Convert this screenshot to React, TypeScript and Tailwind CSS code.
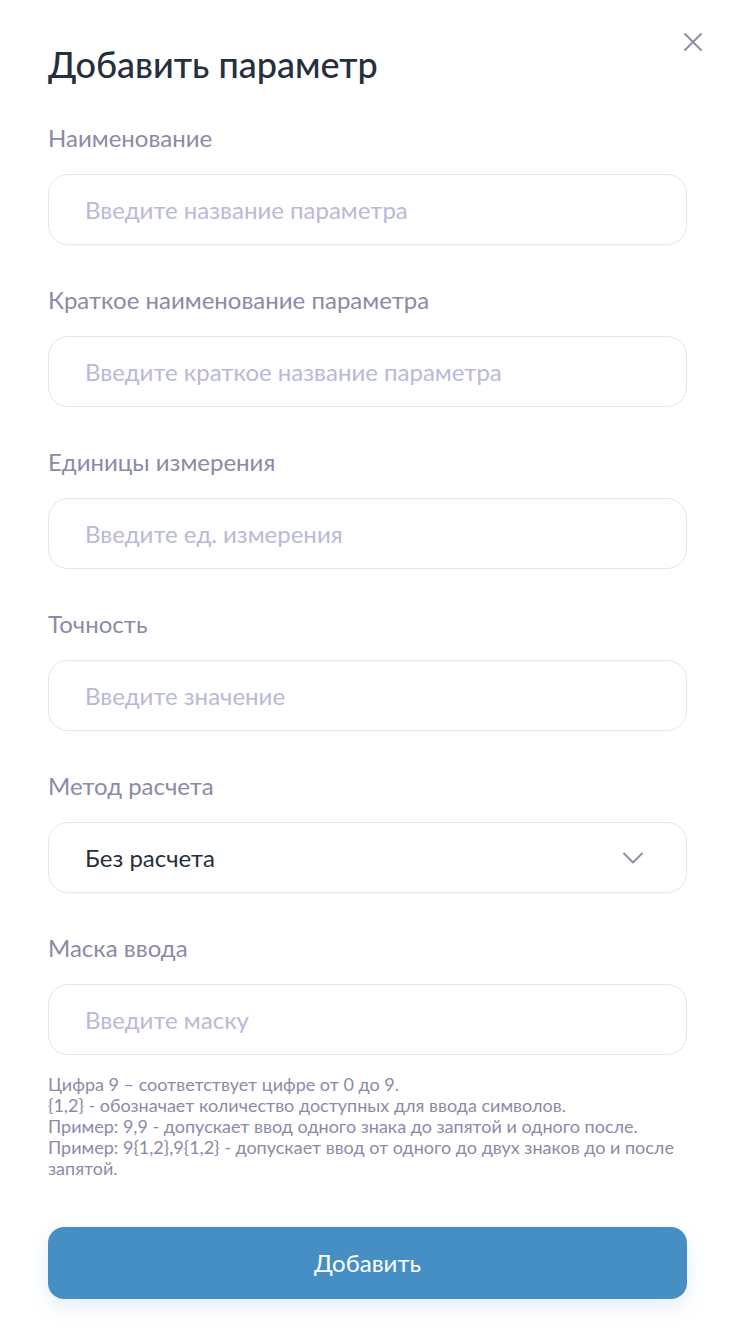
import React from 'react';

const fields = [
  { label: 'Наименование', placeholder: 'Введите название параметра' },
  { label: 'Краткое наименование параметра', placeholder: 'Введите краткое название параметра' },
  { label: 'Единицы измерения', placeholder: 'Введите ед. измерения' },
  { label: 'Точность', placeholder: 'Введите значение' },
];

export default function App() {
  return (
    <div className="min-h-screen bg-white font-['Lato','Noto_Sans',sans-serif] relative px-12 pt-[40px] pb-8">
      <button className="absolute right-[33px] top-[33px] text-[#8b8aa8]">
        <svg width="18" height="18" viewBox="0 0 18 18" fill="none" stroke="currentColor" strokeWidth="1.8" strokeLinecap="round">
          <path d="M1 1l16 16M17 1L1 17" />
        </svg>
      </button>

      <h1 className="text-[36px] leading-[48px] font-medium text-[#262f3d]">Добавить параметр</h1>

      <div className="mt-[35px] flex flex-col">
        {fields.map((f) => (
          <div key={f.label} className="mb-[40px]">
            <div className="text-[24px] leading-[30px] text-[#8b8aa8] mb-[21px]">{f.label}</div>
            <input
              placeholder={f.placeholder}
              className="w-full h-[71px] rounded-[20px] border border-[#d9ebf0] px-9 text-[24px] text-[#262f3d] placeholder:text-[#b9b9d9] outline-none"
            />
          </div>
        ))}

        <div className="mb-[40px]">
          <div className="text-[24px] leading-[30px] text-[#8b8aa8] mb-[21px]">Метод расчета</div>
          <div className="w-full h-[71px] rounded-[20px] border border-[#d9ebf0] pl-9 pr-[43px] flex items-center justify-between">
            <span className="text-[24px] text-[#262f3d]">Без расчета</span>
            <svg width="20" height="12" viewBox="0 0 20 12" fill="none" stroke="#8b8aa8" strokeWidth="1.8" strokeLinecap="round" strokeLinejoin="round">
              <path d="M1 1.5l9 9 9-9" />
            </svg>
          </div>
        </div>

        <div>
          <div className="text-[24px] leading-[30px] text-[#8b8aa8] mb-[21px]">Маска ввода</div>
          <input
            placeholder="Введите маску"
            className="w-full h-[71px] rounded-[20px] border border-[#d9ebf0] px-9 text-[24px] text-[#262f3d] placeholder:text-[#b9b9d9] outline-none"
          />
        </div>

        <div className="mt-[19px] text-[18px] leading-[21px] text-[#8b8aa8]">
          <p>Цифра 9 – соответствует цифре от 0 до 9.</p>
          <p>{'{1,2}'} - обозначает количество доступных для ввода символов.</p>
          <p>Пример: 9,9 - допускает ввод одного знака до запятой и одного после.</p>
          <p>Пример: 9{'{1,2}'},9{'{1,2}'} - допускает ввод от одного до двух знаков до и после запятой.</p>
        </div>

        <button className="mt-[48px] h-[72px] w-full rounded-[16px] bg-[#468fc5] text-white text-[24px] shadow-[0_8px_20px_rgba(70,143,197,0.15)]">
          Добавить
        </button>
      </div>
    </div>
  );
}
